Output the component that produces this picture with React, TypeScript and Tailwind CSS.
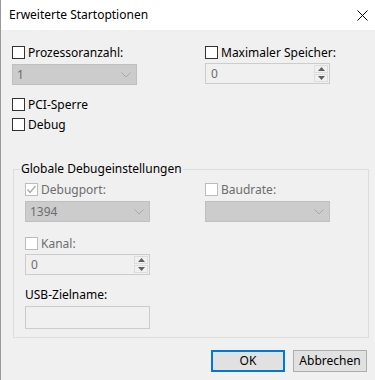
import React from "react";

const font = { fontFamily: '"Noto Sans", "Liberation Sans", sans-serif' };

type BoxProps = { checked?: boolean; disabled?: boolean };

const CheckBox = ({ checked, disabled }: BoxProps) => (
  <span
    className={`flex h-[13px] w-[13px] shrink-0 items-center justify-center border bg-white ${
      disabled ? "border-[#bcbcbc]" : "border-[#333333]"
    }`}
  >
    {checked && (
      <svg width="11" height="11" viewBox="0 0 11 11">
        <polyline points="1.5,5.5 4,8.5 9.5,2" fill="none" stroke="#a8a8a8" strokeWidth="1.3" />
      </svg>
    )}
  </span>
);

const CheckRow = ({ label, checked, disabled }: { label: string } & BoxProps) => (
  <div className="flex h-[17px] items-center gap-[3px]">
    <CheckBox checked={checked} disabled={disabled} />
    <span className={disabled ? "text-[#6d6d6d]" : "text-black"}>{label}</span>
  </div>
);

const Combo = ({ value }: { value?: string }) => (
  <div className="flex h-[21px] w-[125px] items-center justify-between border border-[#bfbfbf] bg-[#cccccc] pl-[4px] pr-[5px] text-[#6d6d6d]">
    <span>{value}</span>
    <svg width="10" height="6" viewBox="0 0 10 6">
      <polyline points="0.5,0.5 5,5 9.5,0.5" fill="none" stroke="#a8a8a8" strokeWidth="1" />
    </svg>
  </div>
);

const Spin = ({ value }: { value: string }) => (
  <div className="flex h-[21px] w-[125px] items-stretch border border-[#cccccc] bg-[#f0f0f0]">
    <span className="flex flex-1 items-center pl-[5px] text-[#6d6d6d]">{value}</span>
    <div className="m-[1px] flex w-[14px] flex-col gap-[1px]">
      <div className="flex flex-1 items-center justify-center border border-[#dcdcdc] bg-[#f0f0f0]">
        <svg width="7" height="4" viewBox="0 0 7 4">
          <polygon points="0,4 3.5,0 7,4" fill="#606060" />
        </svg>
      </div>
      <div className="flex flex-1 items-center justify-center border border-[#dcdcdc] bg-[#f0f0f0]">
        <svg width="7" height="4" viewBox="0 0 7 4">
          <polygon points="0,0 7,0 3.5,4" fill="#606060" />
        </svg>
      </div>
    </div>
  </div>
);

export default function App() {
  return (
    <div className="flex h-[380px] w-[375px] flex-col border-l border-[#9a9a9a] text-[12px] leading-[16px]" style={font}>
      <div className="flex h-[30px] shrink-0 items-center justify-between bg-white pl-[8px] pr-[6px]">
        <span className="text-black">Erweiterte Startoptionen</span>
        <svg width="11" height="11" viewBox="0 0 11 11" className="mr-[1px]">
          <path d="M0.5 0.5 L10.5 10.5 M10.5 0.5 L0.5 10.5" stroke="#000" strokeWidth="1" />
        </svg>
      </div>

      <div className="flex flex-1 flex-col bg-[#f0f0f0] pl-[11px] pt-[14px]">
        <div className="flex">
          <div className="w-[193px]">
            <CheckRow label="Prozessoranzahl:" />
            <div className="mt-[3px]">
              <Combo value="1" />
            </div>
          </div>
          <div>
            <CheckRow label="Maximaler Speicher:" />
            <div className="mt-[2px]">
              <Spin value="0" />
            </div>
          </div>
        </div>

        <div className="mt-[11px]">
          <CheckRow label="PCI-Sperre" />
        </div>
        <div className="mt-[3px]">
          <CheckRow label="Debug" />
        </div>

        <fieldset className="ml-[1px] mt-[28px] w-[356px] border border-[#dcdcdc] p-0">
          <legend className="ml-[6px] h-[16px] px-[1px] text-black">Globale Debugeinstellungen</legend>
          <div className="pb-[8px] pl-[11px] pt-[4px]">
            <div className="flex">
              <div className="w-[180px]">
                <CheckRow label="Debugport:" checked disabled />
                <div className="mt-[3px]">
                  <Combo value="1394" />
                </div>
              </div>
              <div>
                <CheckRow label="Baudrate:" disabled />
                <div className="mt-[3px]">
                  <Combo />
                </div>
              </div>
            </div>
            <div className="mt-[13px]">
              <CheckRow label="Kanal:" disabled />
            </div>
            <div className="mt-[2px]">
              <Spin value="0" />
            </div>
            <div className="mt-[12px] text-black">USB-Zielname:</div>
            <div className="mt-[3px] h-[23px] w-[125px] border border-[#cccccc] bg-[#f0f0f0]" />
          </div>
        </fieldset>

        <div className="mt-[12px] flex justify-end gap-[8px] pr-[8px]">
          <button className="h-[22px] w-[74px] border-2 border-[#0078d7] bg-[#e1e1e1] text-black">OK</button>
          <button className="h-[22px] w-[74px] border border-[#adadad] bg-[#e1e1e1] text-black">Abbrechen</button>
        </div>
      </div>
    </div>
  );
}
